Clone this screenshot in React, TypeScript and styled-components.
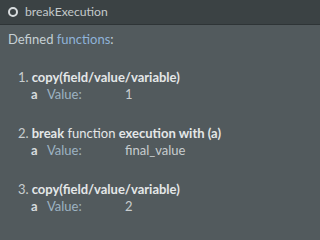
import React from "react";
import styled, { createGlobalStyle } from "styled-components";

const Global = createGlobalStyle`
  html, body { margin: 0; padding: 0; background: #525a5d; }
  body { font-family: Lato, "Open Sans", sans-serif; }
`;

const Panel = styled.div`
  width: 100%;
  min-height: 100vh;
  background: #525a5d;
  display: flex;
  flex-direction: column;
  overflow: hidden;
`;

const Header = styled.div`
  height: 25px;
  background: #3b4244;
  border-bottom: 1px solid #2e3436;
  display: flex;
  align-items: center;
  padding-left: 8px;
  gap: 7px;
  color: #c4c9cb;
  font-size: 12.2px;
  margin-top: -1px;
`;

const Ring = styled.span`
  width: 6px;
  height: 6px;
  border: 2px solid #d8dcde;
  border-radius: 50%;
`;

const Body = styled.div`
  padding: 5px 8px 0 8px;
  display: flex;
  flex-direction: column;
`;

const Intro = styled.div`
  font-size: 13px;
  color: #c6d0d4;
  line-height: 18px;
  margin-bottom: 20px;
`;

const Fn = styled.span`
  color: #8fb3d9;
`;

const List = styled.div`
  display: flex;
  flex-direction: column;
  gap: 20px;
  padding-left: 10px;
`;

const Item = styled.div`
  display: flex;
  flex-direction: column;
`;

const Title = styled.div`
  font-size: 13px;
  line-height: 18px;
  color: #e4e7e8;
  white-space: nowrap;
`;

const Num = styled.span`
  color: #c8cdcf;
  margin-right: 3px;
`;

const B = styled.b`
  font-weight: 700;
`;

const Param = styled.div`
  display: flex;
  align-items: center;
  font-size: 13px;
  line-height: 17px;
  padding-left: 13px;
  margin-bottom: 1px;
`;

const Letter = styled.span`
  width: 16px;
  font-weight: 700;
  color: #d8dcde;
`;

const Label = styled.span`
  width: 78px;
  color: #9db3c2;
`;

const Val = styled.span`
  color: #c8cdcf;
`;

type Part = { t: string; bold: boolean };
const items: { parts: Part[]; value: string }[] = [
  { parts: [{ t: "copy(field/value/variable)", bold: true }], value: "1" },
  {
    parts: [
      { t: "break", bold: true },
      { t: " function ", bold: false },
      { t: "execution with (a)", bold: true },
    ],
    value: "final_value",
  },
  { parts: [{ t: "copy(field/value/variable)", bold: true }], value: "2" },
];

export default function App() {
  return (
    <>
      <Global />
      <Panel>
        <Header>
          <Ring />
          <span>breakExecution</span>
        </Header>
        <Body>
          <Intro>
            Defined <Fn>functions</Fn>:
          </Intro>
          <List>
            {items.map((it, i) => (
              <Item key={i}>
                <Title>
                  <Num>{i + 1}.</Num>
                  {it.parts.map((p, j) =>
                    p.bold ? <B key={j}>{p.t}</B> : <span key={j}>{p.t}</span>
                  )}
                </Title>
                <Param>
                  <Letter>a</Letter>
                  <Label>Value:</Label>
                  <Val>{it.value}</Val>
                </Param>
              </Item>
            ))}
          </List>
        </Body>
      </Panel>
    </>
  );
}
